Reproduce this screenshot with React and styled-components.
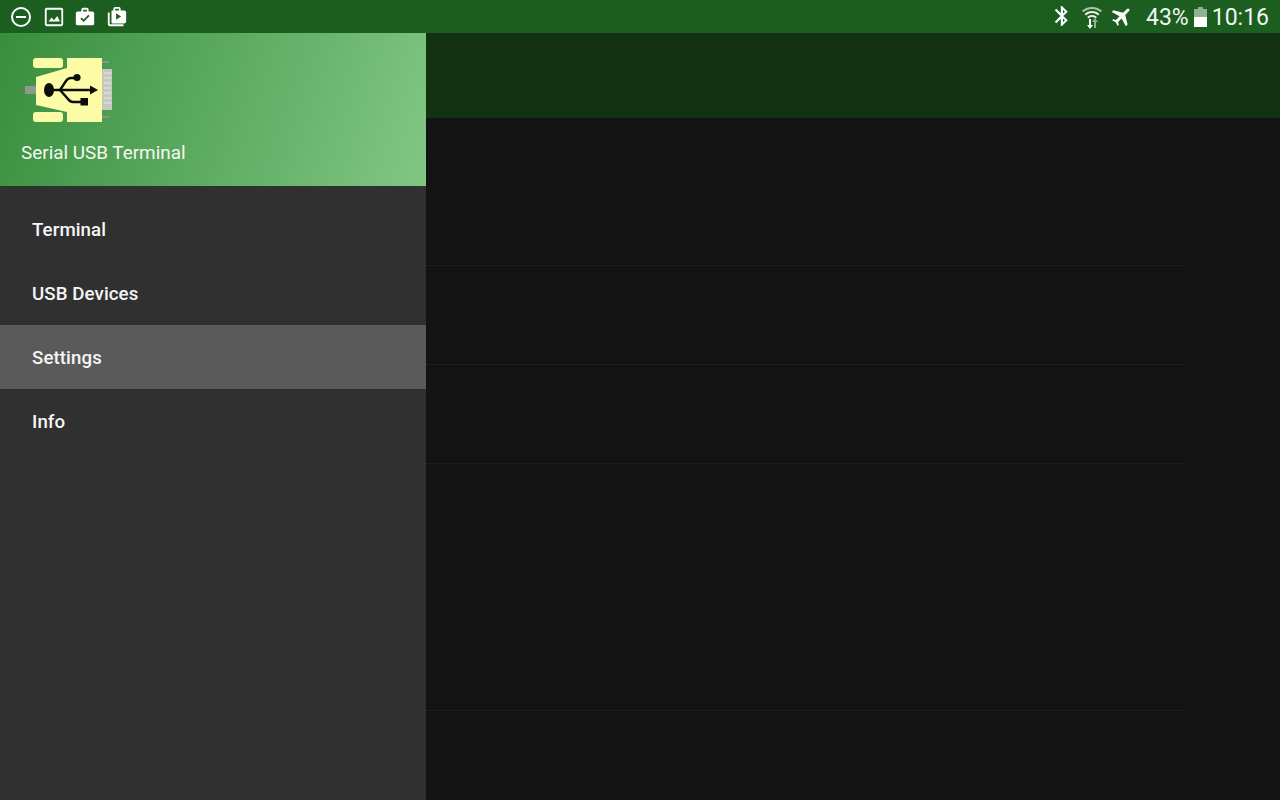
import React from "react";
import styled, { createGlobalStyle } from "styled-components";

const Global = createGlobalStyle`
  html, body { margin: 0; padding: 0; background: #131313; }
  body { font-family: Roboto, "Liberation Sans", sans-serif; overflow: hidden; }
`;

const Page = styled.div`
  width: 1280px;
  height: 800px;
  display: flex;
  flex-direction: column;
  overflow: hidden;
`;
const StatusBar = styled.div`
  height: 33px;
  flex: none;
  background: #1b5e20;
  display: flex;
  align-items: center;
  justify-content: space-between;
  padding: 0 11px 0 9px;
  color: #fff;
`;
const StatusGroup = styled.div`
  display: flex;
  align-items: center;
  gap: ${(p) => p.$gap || 0}px;
`;
const StatusText = styled.span`
  font-size: 23px;
  line-height: 35px;
  height: 33px;
  color: #f2f6f2;
  margin-left: ${(p) => p.$left || 0}px;
`;
const Body = styled.div`
  flex: 1;
  display: flex;
  min-height: 0;
`;
const Drawer = styled.nav`
  width: 426px;
  flex: none;
  background: #303030;
  display: flex;
  flex-direction: column;
`;
const DrawerHeader = styled.div`
  height: 153px;
  box-sizing: border-box;
  padding: 20px 21px 0;
  background: linear-gradient(108deg, #388e3c 0%, #81c784 100%);
  display: flex;
  flex-direction: column;
`;
const Logo = styled.svg`
  flex: none;
  filter: blur(0.4px);
`;
const HeaderTitle = styled.div`
  margin-top: 18px;
  font-size: 18.9px;
  line-height: 24px;
  color: #f4f8f4;
`;
const Menu = styled.div`
  padding-top: 11px;
  display: flex;
  flex-direction: column;
`;
const MenuItem = styled.div`
  height: 64px;
  line-height: 66px;
  padding-left: 32px;
  font-size: 18.67px;
  letter-spacing: 0.1px;
  font-weight: 500;
  color: #f5f5f5;
  background: ${(p) => (p.$active ? "#5a5a5a" : "transparent")};
`;
const Main = styled.div`
  flex: 1;
  display: flex;
  flex-direction: column;
`;
const Toolbar = styled.div`
  height: 85px;
  flex: none;
  background: #133211;
`;
const List = styled.div`
  width: 758px;
  display: flex;
  flex-direction: column;
`;
const Row = styled.div`
  height: ${(p) => p.$h}px;
  box-sizing: border-box;
  border-bottom: 1px solid #1e1e1e;
`;

const Ic = ({ size = 24, children, ...rest }) => (
  <svg width={size} height={size} viewBox="0 0 24 24" fill="#fff" {...rest}>
    {children}
  </svg>
);

const UsbLogo = () => (
  <Logo width="92" height="70" viewBox="21 53 92 70">
    <rect x="25" y="86" width="11" height="8" fill="#8f9a8e" />
    <rect x="102" y="61" width="7" height="2" fill="#8a948a" />
    <rect x="102" y="116" width="7" height="2" fill="#8a948a" />
    <rect x="102" y="69" width="10" height="41" fill="#c6c9c0" />
    <path d="M104 73h7M104 78h7M104 83h7M104 88h7M104 93h7M104 98h7M104 103h7" stroke="#e8e8e0" strokeWidth="1.2" />
    <rect x="33" y="58" width="30" height="10" rx="3" fill="#fdfca6" />
    <rect x="33" y="112" width="30" height="10" rx="3" fill="#fdfca6" />
    <path d="M67 58h35v64H67v-10l-31-7V77l31-9z" fill="#fdfca6" />
    <ellipse cx="49" cy="90" rx="5" ry="7" fill="#0c0c08" />
    <path d="M50 90h42" stroke="#0c0c08" strokeWidth="2.600" fill="none" />
    <path d="M98 90l-8-4.500v9z" fill="#0c0c08" />
    <path d="M60 90l6-9q2-3 5-3h6" stroke="#0c0c08" strokeWidth="2.400" fill="none" />
    <circle cx="77" cy="77.500" r="3.600" fill="#0c0c08" />
    <path d="M60 90l8 9q2 3 5 3h8" stroke="#0c0c08" strokeWidth="2.400" fill="none" />
    <rect x="80.500" y="98" width="7.500" height="7.500" fill="#0c0c08" />
  </Logo>
);

export default function App() {
  return (
    <Page>
      <Global />
      <StatusBar>
        <StatusGroup $gap={9.5}>
          <Ic>
            <path d="M12 2a10 10 0 1 0 0 20 10 10 0 0 0 0-20zm0 18a8 8 0 1 1 0-16 8 8 0 0 1 0 16zM7 11h10v2H7z" />
          </Ic>
          <Ic size={22}>
            <path d="M4 2h16a2 2 0 0 1 2 2v16a2 2 0 0 1-2 2H4a2 2 0 0 1-2-2V4a2 2 0 0 1 2-2zm0 2v16h16V4zm2 13l3.500-4.500 2.500 3 3.500-4.500 3 6z" fillRule="evenodd" />
          </Ic>
          <Ic size={22}>
            <path d="M20 6h-4V4a2 2 0 0 0-2-2h-4a2 2 0 0 0-2 2v2H4a2 2 0 0 0-2 2v11a2 2 0 0 0 2 2h16a2 2 0 0 0 2-2V8a2 2 0 0 0-2-2zM10 4h4v2h-4zm.5 13.500L7 14l1.400-1.400 2.100 2.100 5.100-5.100L17 11z" fillRule="evenodd" />
          </Ic>
          <Ic size={22}>
            <path d="M4 7H2v13a2 2 0 0 0 2 2h15v-2H4z" />
            <path d="M20 5h-4V3a2 2 0 0 0-2-2h-4a2 2 0 0 0-2 2v2H6v13a1 1 0 0 0 1 1h13a2 2 0 0 0 2-2V7a2 2 0 0 0-2-2zm-10-2h4v2h-4zm1 12V8l5.500 3.500z" fillRule="evenodd" />
          </Ic>
        </StatusGroup>
        <StatusGroup>
          <Ic size={24} style={{ marginRight: 6, marginTop: -2 }}>
            <path d="M17.700 7.700L12 2h-1.200v7.200L6.300 4.800 4.800 6.300l5.700 5.700-5.700 5.700 1.500 1.500 4.500-4.400V22H12l5.700-5.700-4.300-4.300zM13 5.800l1.900 1.900L13 9.600zm1.900 10.500L13 18.200v-3.800z" />
          </Ic>
          <svg width="24" height="26" viewBox="0 0 24 26" style={{ marginRight: 6 }}>
            <path d="M12 3C7.800 3 4.300 4.500 2 6.700l1.500 1.600C5.500 6.400 8.500 5 12 5s6.500 1.400 8.500 3.300L22 6.700C19.700 4.500 16.200 3 12 3z" fill="#a9c4a9" />
            <path d="M12 7c-3 0-5.700 1.200-7.400 2.900l1.400 1.500C7.400 10 9.600 9 12 9s4.600 1 6 2.400l1.400-1.500C17.700 8.200 15 7 12 7zM12 11c-2 0-3.700.8-4.900 1.900l1.400 1.500C9.400 13.600 10.600 13 12 13s2.600.6 3.500 1.400l1.400-1.500C15.700 11.800 14 11 12 11z" fill="#e8f0e8" />
            <path d="M9 15h2v6h2l-3 4-3-4h2z" fill="#fff" />
            <path d="M15 14l3 4h-2v6h-2v-6h-2z" fill="#8fb28f" />
          </svg>
          <Ic size={24} style={{ marginTop: -2 }}>
            <path d="M22 16.500v-2.500l-8.500-5V3.500a1.500 1.500 0 0 0-3 0V9L2 14v2.500l8.500-2.500v5l-2.500 1.500V22l4-1 4 1v-1.500L13.500 19v-5z" transform="rotate(45 12 12)" />
          </Ic>
          <StatusText $left={12}>43%</StatusText>
          <svg width="13" height="20" viewBox="0 0 13 20" style={{ marginLeft: 5 }}>
            <path d="M4 0h5v2h4v18H0V2h4z" fill="#8fb292" />
            <rect x="0" y="10" width="13" height="10" fill="#fff" />
          </svg>
          <StatusText $left={5}>10:16</StatusText>
        </StatusGroup>
      </StatusBar>
      <Body>
        <Drawer>
          <DrawerHeader>
            <UsbLogo />
            <HeaderTitle>Serial USB Terminal</HeaderTitle>
          </DrawerHeader>
          <Menu>
            <MenuItem>Terminal</MenuItem>
            <MenuItem>USB Devices</MenuItem>
            <MenuItem $active>Settings</MenuItem>
            <MenuItem>Info</MenuItem>
          </Menu>
        </Drawer>
        <Main>
          <Toolbar />
          <List>
            <Row $h={148} />
            <Row $h={99} />
            <Row $h={99} />
            <Row $h={247} />
          </List>
        </Main>
      </Body>
    </Page>
  );
}
